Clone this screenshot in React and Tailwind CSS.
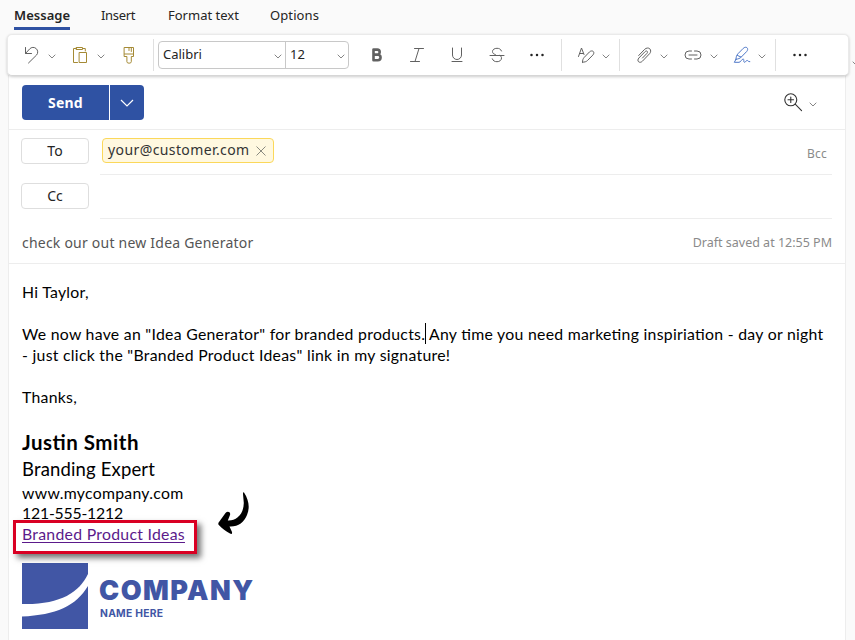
import React from 'react';

const Icon = ({ children, className = '', size = 'w-[18px] h-[18px]', width = 1 }) => (
  <svg
    viewBox="0 0 18 18"
    className={`shrink-0 ${size} ${className}`}
    fill="none"
    stroke="currentColor"
    strokeWidth={width}
    strokeLinecap="round"
    strokeLinejoin="round"
  >
    {children}
  </svg>
);

const Chevron = ({ className = 'mt-0.5' }) => (
  <svg
    viewBox="0 0 8 5"
    className={`w-2 h-[5px] shrink-0 text-[#777] ${className}`}
    fill="none"
    stroke="currentColor"
    strokeWidth="0.9"
  >
    <path d="M.7.7 4 4 7.3.7" />
  </svg>
);

const Separator = ({ className = '' }) => (
  <div className={`w-px h-8 shrink-0 bg-[#e0e0e0] ${className}`} />
);

const Dots = ({ className = '' }) => (
  <Icon className={`text-[#242424] ${className}`}>
    <g fill="currentColor" stroke="none">
      <circle cx="3.5" cy="9" r="1.25" />
      <circle cx="9" cy="9" r="1.25" />
      <circle cx="14.5" cy="9" r="1.25" />
    </g>
  </Icon>
);

const Tabs = () => (
  <nav className="flex h-[34px] pl-3.5 text-[13px] leading-[18px] pt-1.5 text-[#242424]">
    <div className="w-[56px] h-6 border-b-3 border-[#2f52a3] font-semibold whitespace-nowrap">
      <span className="tracking-[0.05px]">Message</span>
    </div>
    <span className="ml-[31px] w-[67px] tracking-[-0.3px]">Insert</span>
    <span className="w-[102px]">Format text</span>
    <span className="tracking-[0.1px]">Options</span>
  </nav>
);

const Toolbar = () => (
  <div className="flex items-center h-[41px]">
    <div className="ml-[7px] w-[842px] h-[42px] shrink-0 self-start flex items-center rounded-[5px] bg-white border border-[#eaeaea] border-b-[#d6d6d6] shadow-[0_1px_3px_rgba(0,0,0,0.2)] text-[#616161] relative z-10">
      <Icon className="ml-[14px]">
        <path d="M3.5 1.5v6h6M3.5 7.5l4.2-4.6a4.6 4.6 0 0 1 6.8 6.2L6.5 17" />
      </Icon>
      <Chevron className="ml-2 mt-0.5" />
      <Icon className="ml-[15px] text-[#a58a35]">
        <path d="M5.5 2.5h-3v14h4M12 2.5h2.3V5M5.5 1.5h6v2h-6zM8.5 6.5h7v10h-7z" />
      </Icon>
      <Chevron className="ml-2 mt-0.5" />
      <Icon className="ml-[15px] text-[#a58a35]">
        <path d="M4.5 1.500h9v9h-2.200v5.200a2.200 1.500 0 0 1-4.400 0v-5.200H4.500zM4.500 8h9M9 1.500v3M11.300 1.500v4" />
      </Icon>
      <Separator className="ml-[15px]" />
      <div className="ml-1 w-[191px] h-7 shrink-0 flex items-center rounded border border-[#c8c8c8] text-[13px] text-[#242424]">
        <span className="pl-1 w-[115px]">Calibri</span>
        <Chevron />
        <div className="ml-[3px] w-px h-full bg-[#c8c8c8]" />
        <span className="pl-1 w-[51px]">12</span>
        <Chevron />
      </div>
      <Icon className="ml-[19px]" width={2.6}>
        <path d="M5.500 3.600h3.700a2.500 2.500 0 0 1 0 5H5.500zM5.500 8.700h4.300a2.700 2.700 0 0 1 0 5.500H5.500z" />
      </Icon>
      <Icon className="ml-[22px]">
        <path d="M6.500 2.500h9M2.500 15.500h9M11 2.500 7 15.500" />
      </Icon>
      <Icon className="ml-[22px]">
        <path d="M4.500 2v7a4.500 4.500 0 0 0 9 0V2M4 15.500h10" />
      </Icon>
      <Icon className="ml-[22px]">
        <path d="M13.500 5C12.800 3 11 2.300 9 2.300 6.500 2.300 4.500 3.500 4.500 5.500c0 1.700 1 2.500 2.800 3M2 9.500h14M12 9.500c1 .7 1.500 1.500 1.500 2.500 0 2.300-2 3.700-4.500 3.700-2.300 0-4-.9-4.700-2.900" />
      </Icon>
      <Dots className="ml-[22px]" />
      <Separator className="ml-[15px]" />
      <Icon className="ml-[15px]">
        <path d="M1.500 10.500 4.500 2l2.500 6.500M2.800 7.500h3.600M5.500 16.200c0-2 .5-3.500 1.700-4.800l5.300-5.500c1.100-1.100 2.900-1.300 3.800-.4s.6 2.500-.5 3.600L10.500 14.500c-1.200 1.200-2.900 1.700-5 1.700z" />
      </Icon>
      <Chevron className="ml-[7px] mt-0.5" />
      <Separator className="ml-[9px]" />
      <Icon className="ml-[15px]">
        <path d="m3.700 9.500 6-6.200c1.500-1.500 3.900-1.700 5.100-.5s1.200 3.400-.2 4.900l-7.300 7.600c-1.200 1.200-2.900 1.300-3.800.4s-.7-2.500.4-3.700l6.200-6.400c.7-.7 1.600-.8 2.100-.3s.4 1.300-.2 2L7.500 12" />
      </Icon>
      <Chevron className="ml-[7px] mt-0.5" />
      <Icon className="ml-[16px]">
        <path d="M7.500 5H5a4 4 0 0 0 0 8h2.500M10.500 5H13a4 4 0 0 1 0 8h-2.500M5 9h8" />
      </Icon>
      <Chevron className="ml-2 mt-0.5" />
      <Icon className="ml-[15px] text-[#4f78c8]">
        <path d="M3 13.300c0-2.300.6-4 2-5.600l5.200-5.300c1.300-1.300 3-1.500 3.900-.6s.7 2.500-.5 3.800l-5.300 5.400c-1.400 1.400-3.100 2-5.300 2.300zM4.500 9.500l3.500 1.500M3 13.300 1.300 16.300H6c1.900 0 2.600-3.300 4.200-3.300 1.400 0-.2 3.300 1.300 3.300 1.200 0 1.500-1.900 2.600-1.900 1 0 .8 1.500 2.700 1.300" />
      </Icon>
      <Chevron className="ml-[7px] mt-0.5" />
      <Separator className="ml-[9px]" />
      <Dots className="ml-[15px]" />
    </div>
    <Chevron className="ml-[3px] mt-[17px]" />
  </div>
);

const SendRow = () => (
  <div className="flex items-start h-[55px] pl-[13px] pt-[10px] border-b border-[#ededed]">
    <div className="flex w-[122px] h-[35px] rounded-[4px] bg-[#2f52a3] text-white">
      <div className="w-[88px] border-r border-white flex items-center justify-center text-[14px] tracking-[0.2px] font-bold">
        Send
      </div>
      <div className="flex-1 flex items-center justify-center">
        <svg viewBox="0 0 14 8" className="w-3.5 h-2" fill="none" stroke="currentColor" strokeWidth="1.2">
          <path d="M1 1l6 6 6-6" />
        </svg>
      </div>
    </div>
    <Icon className="ml-[639px] mt-[7px] text-[#333]" size="w-5 h-5" width={1}>
      <circle cx="7" cy="7" r="5.4" />
      <path d="M4.5 7h5M7 4.5v5M11 11l5.7 5.700" />
    </Icon>
    <Chevron className="ml-[6px] mt-[17px]" />
  </div>
);

const FieldButton = ({ children }) => (
  <div className="w-[68px] h-[26px] pb-0.5 flex items-center justify-center rounded-[4px] border border-[#dedede] text-[14px] text-[#242424]">
    {children}
  </div>
);

const Recipients = () => (
  <div className="pl-3 pr-[13px]">
    <div className="flex h-[54px] pt-2">
      <FieldButton>To</FieldButton>
      <div className="ml-[11px] flex-1 h-[38px] border-b border-[#ededed] flex items-start pl-0.5 -mt-px pt-px">
        <div className="w-[172px] h-[25px] pb-0.5 flex items-center rounded-[4px] border border-[#fbd85a] bg-[#fff8e0] pl-[5px] text-[14px] text-[#333] whitespace-nowrap">
          <span className="w-[148px] tracking-[0.4px]">your@customer.com</span>
          <svg viewBox="0 0 10 10" className="w-2.5 h-2.5 mt-0.5 text-[#8a8a80]" fill="none" stroke="currentColor">
            <path d="m.5.5 9 9m0-9-9 9" />
          </svg>
        </div>
        <span className="ml-auto mr-[5px] mt-2 text-[12px] leading-4 tracking-[0.2px] text-[#8a8a8a]">Bcc</span>
      </div>
    </div>
    <div className="flex h-[44px]">
      <div className="-mt-px"><FieldButton>Cc</FieldButton></div>
      <div className="ml-[11px] flex-1 h-[35px] border-b border-[#ededed]" />
    </div>
  </div>
);

const Subject = () => (
  <div className="flex items-center justify-between h-[45px] -mt-[9px] pl-[13px] pr-[13px] pt-[3px] border-b border-[#ededed]">
    <span className="text-[14px] tracking-[0.22px] text-[#555]">check our out new Idea Generator</span>
    <span className="pt-0.5 text-[12.5px] text-[#8a8a8a]">Draft saved at 12:55 PM</span>
  </div>
);

const Arrow = () => (
  <svg viewBox="0 0 32 44" className="w-8 h-11" fill="black">
    <path d="M26 1.500C31 9 32 17 29 24c-3 7.500-9 12-17.500 11.500L14 41c.3 2-.6 2.300-2 1.600C8 40.500 4 37.500.8 34 0 33 .2 32 1 31l6.500-9c2-2.400 5.500-1 4.500 2-.6 2-1.500 3.500-2.200 5.500C18 30 25.500 24 25.800 12L25 3c0-1.500.5-2.200 1-1.500z" />
  </svg>
);

const Logo = () => (
  <div className="flex items-start text-[#4156a5] font-[Inter,sans-serif]">
    <svg viewBox="0 0 66 66" className="w-[66px] h-[66px]" fill="currentColor">
      <path d="M0 0h66v11C57 30 37 42 0 41z" />
      <path d="M0 53.500C34 52 54 43 66 23v43H0z" />
    </svg>
    <div className="ml-[11px] pt-[14px]">
      <div className="font-black text-[27px] leading-[27px] tracking-[1.450px]">COMPANY</div>
      <div className="font-bold text-[10.300px] leading-[13px] mt-[3px] ml-[1px]">NAME HERE</div>
    </div>
  </div>
);

// keep the "ti" ligature although the text is tracked
const Body = () => (
  <div className="pl-[13px] pt-[17px] font-[Lato,sans-serif] text-[15.8px] leading-[21px] tracking-[0.28px] [font-feature-settings:'liga'_1] text-black whitespace-nowrap">
    <p>Hi Taylor,</p>
    <p className="mt-[21px]">
      We now have an "Idea Generator" for branded products.
      <span className="inline-block w-px h-[21px] -mr-px align-bottom bg-black" /> Any time you need marketing inspiriation - day or night
    </p>
    <p>- just click the "Branded Product Ideas" link in my signature!</p>
    <p className="mt-[21px]">Thanks,</p>
    <div className="flex mt-[21px]">
      <div className="w-[175px]">
        <p className="text-[20.500px] leading-[28px] tracking-[0.5px] font-bold">Justin Smith</p>
        <p className="text-[18.500px] leading-[27px] tracking-[0.150px]">Branding Expert</p>
        <p className="leading-[20px]">www.mycompany.com</p>
        <p className="leading-[20px] tracking-[-0.2px]">121-555-1212</p>
        <div className="-ml-[9px] -mt-[3px] w-[184px] h-[34px] border-3 border-[#d90023] bg-white pl-[6px] shadow-[4px_4px_6px_rgba(0,0,0,0.55)] relative">
          <span className="text-[#5b1a8b] underline underline-offset-2">Branded Product Ideas</span>
        </div>
      </div>
      <div className="ml-[21px] mt-[63px]"><Arrow /></div>
    </div>
    <div className="mt-[9px]"><Logo /></div>
  </div>
);

export default function App() {
  return (
    <div className="w-[855px] h-[640px] overflow-hidden bg-[#fafafa] font-['Noto_Sans',sans-serif]">
      <Tabs />
      <Toolbar />
      <main className="ml-2 w-[838px] h-[565px] bg-white border-x border-[#ededed]">
        <SendRow />
        <Recipients />
        <Subject />
        <Body />
      </main>
    </div>
  );
}
